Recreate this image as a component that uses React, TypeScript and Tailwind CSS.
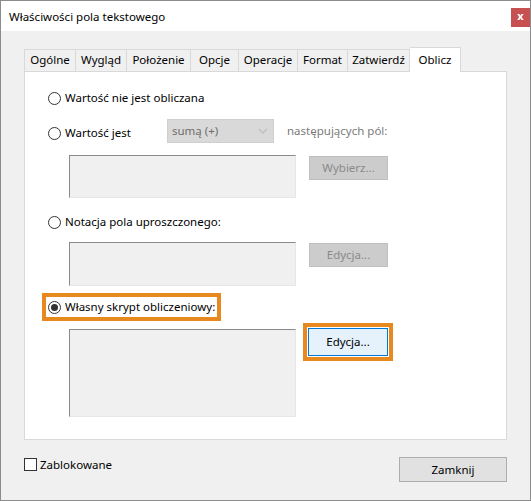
import React from "react";

function Radio({ checked = false }: { checked?: boolean }) {
  return (
    <svg width="13" height="13" viewBox="0 0 13 13" className="shrink-0">
      <circle cx="6.5" cy="6.5" r="6" fill="#ffffff" stroke="#333333" strokeWidth="1" />
      {checked && <circle cx="6.5" cy="6.5" r="3.5" fill="#333333" />}
    </svg>
  );
}

function RadioLabel({ text, checked = false }: { text: string; checked?: boolean }) {
  return (
    <div className="flex h-[20px] items-center gap-[4px] whitespace-nowrap text-black">
      <Radio checked={checked} />
      <span>{text}</span>
    </div>
  );
}

function TextBox({ h }: { h: string }) {
  return (
    <div
      className={`ml-[44px] w-[227px] ${h} shrink-0 border-t border-l border-r border-b border-t-[#8a8a8a] border-l-[#8a8a8a] border-r-[#e6e6e6] border-b-[#e6e6e6] bg-[#f0f0f0]`}
    />
  );
}

function DisabledButton({ text }: { text: string }) {
  return (
    <div className="ml-[13px] mt-[1px] flex h-[24px] w-[79px] shrink-0 items-center justify-center border border-[#bfbfbf] bg-[#cccccc] text-[#8a8a8a]">
      {text}
    </div>
  );
}

const tabs: { label: string; w: string }[] = [
  { label: "Ogólne", w: "w-[52px]" },
  { label: "Wygląd", w: "w-[51px]" },
  { label: "Położenie", w: "w-[64px]" },
  { label: "Opcje", w: "w-[48px]" },
  { label: "Operacje", w: "w-[59px]" },
  { label: "Format", w: "w-[50px]" },
  { label: "Zatwierdź", w: "w-[62px]" },
];

export default function App() {
  return (
    <div className="flex h-[501px] w-[531px] flex-col border border-[#8c8c8c] bg-[#f0f0f0] font-['Noto_Sans',sans-serif] text-[11.5px] text-black">
      {/* title bar */}
      <div className="flex h-[30px] shrink-0 justify-between bg-white">
        <div className="flex items-center pl-[8px] pt-[1px]">Właściwości pola tekstowego</div>
        <div className="mt-[7px] flex h-[19px] w-[19px] items-center justify-center bg-[#c75050] pb-[2px] text-[11px] font-bold text-white">
          x
        </div>
      </div>

      {/* body */}
      <div className="flex flex-col px-[23px]">
        {/* tabs */}
        <div className="mt-[16px] flex h-[24px] items-end">
          {tabs.map((t, i) => (
            <div
              key={t.label}
              className={`flex h-[22px] ${t.w} items-center justify-center border-t border-r border-[#d9d9d9] bg-[#f0f0f0] pb-[1px] ${i === 0 ? "border-l" : ""}`}
            >
              {t.label}
            </div>
          ))}
          <div className="relative z-10 -mb-px flex h-[25px] w-[51px] items-start justify-center border-t border-r border-[#d9d9d9] bg-white pt-[3px]">
            Oblicz
          </div>
        </div>

        {/* panel */}
        <div className="flex h-[369px] w-[483px] flex-col border border-[#d9d9d9] bg-white pt-[16px]">
          <div className="ml-[23px]">
            <RadioLabel text="Wartość nie jest obliczana" />
          </div>

          <div className="mt-[11px] flex h-[24px] items-start">
            <div className="ml-[23px] mt-[4px] w-[119px]">
              <RadioLabel text="Wartość jest" />
            </div>
            <div className="flex h-[24px] w-[107px] items-center justify-between border border-[#cfcfcf] bg-[#d9d9d9] pl-[4px] pr-[5px] text-[#6d6d6d]">
              <span>sumą (+)</span>
              <svg width="10" height="6" viewBox="0 0 10 6">
                <path d="M1 1 L5 5 L9 1" fill="none" stroke="#bdbdbd" strokeWidth="1.2" />
              </svg>
            </div>
            <div className="ml-[13px] flex h-[24px] items-center text-[#7a7a7a]">następujących pól:</div>
          </div>

          <div className="mt-[12px] flex items-start">
            <TextBox h="h-[43px]" />
            <DisabledButton text="Wybierz..." />
          </div>

          <div className="ml-[23px] mt-[14px]">
            <RadioLabel text="Notacja pola uproszczonego:" />
          </div>

          <div className="mt-[10px] flex items-start">
            <TextBox h="h-[44px]" />
            <DisabledButton text="Edycja..." />
          </div>

          <div className="ml-[17px] mt-[7px] flex h-[28px] w-[179px] items-center border-4 border-[#e8891f] pl-[2px]">
            <RadioLabel text="Własny skrypt obliczeniowy:" checked />
          </div>

          <div className="mt-[2px] flex items-start">
            <div className="mt-[6px]">
              <TextBox h="h-[88px]" />
            </div>
            <div className="ml-[7px] h-[38px] w-[90px] border-4 border-[#e8891f] bg-white p-[1px]">
              <div className="flex h-full w-full items-center justify-center border border-[#0078d7] bg-[#e5f1fb]">
                Edycja...
              </div>
            </div>
          </div>
        </div>

        {/* bottom row */}
        <div className="mt-[17px] flex items-start justify-between">
          <div className="mt-[1px] flex items-center gap-[3px]">
            <div className="h-[13px] w-[13px] border border-[#333333] bg-white" />
            <span className="leading-[13px]">Zablokowane</span>
          </div>
          <div className="flex h-[25px] w-[108px] items-center justify-center border border-[#adadad] bg-[#e1e1e1]">
            Zamknij
          </div>
        </div>
      </div>
    </div>
  );
}
